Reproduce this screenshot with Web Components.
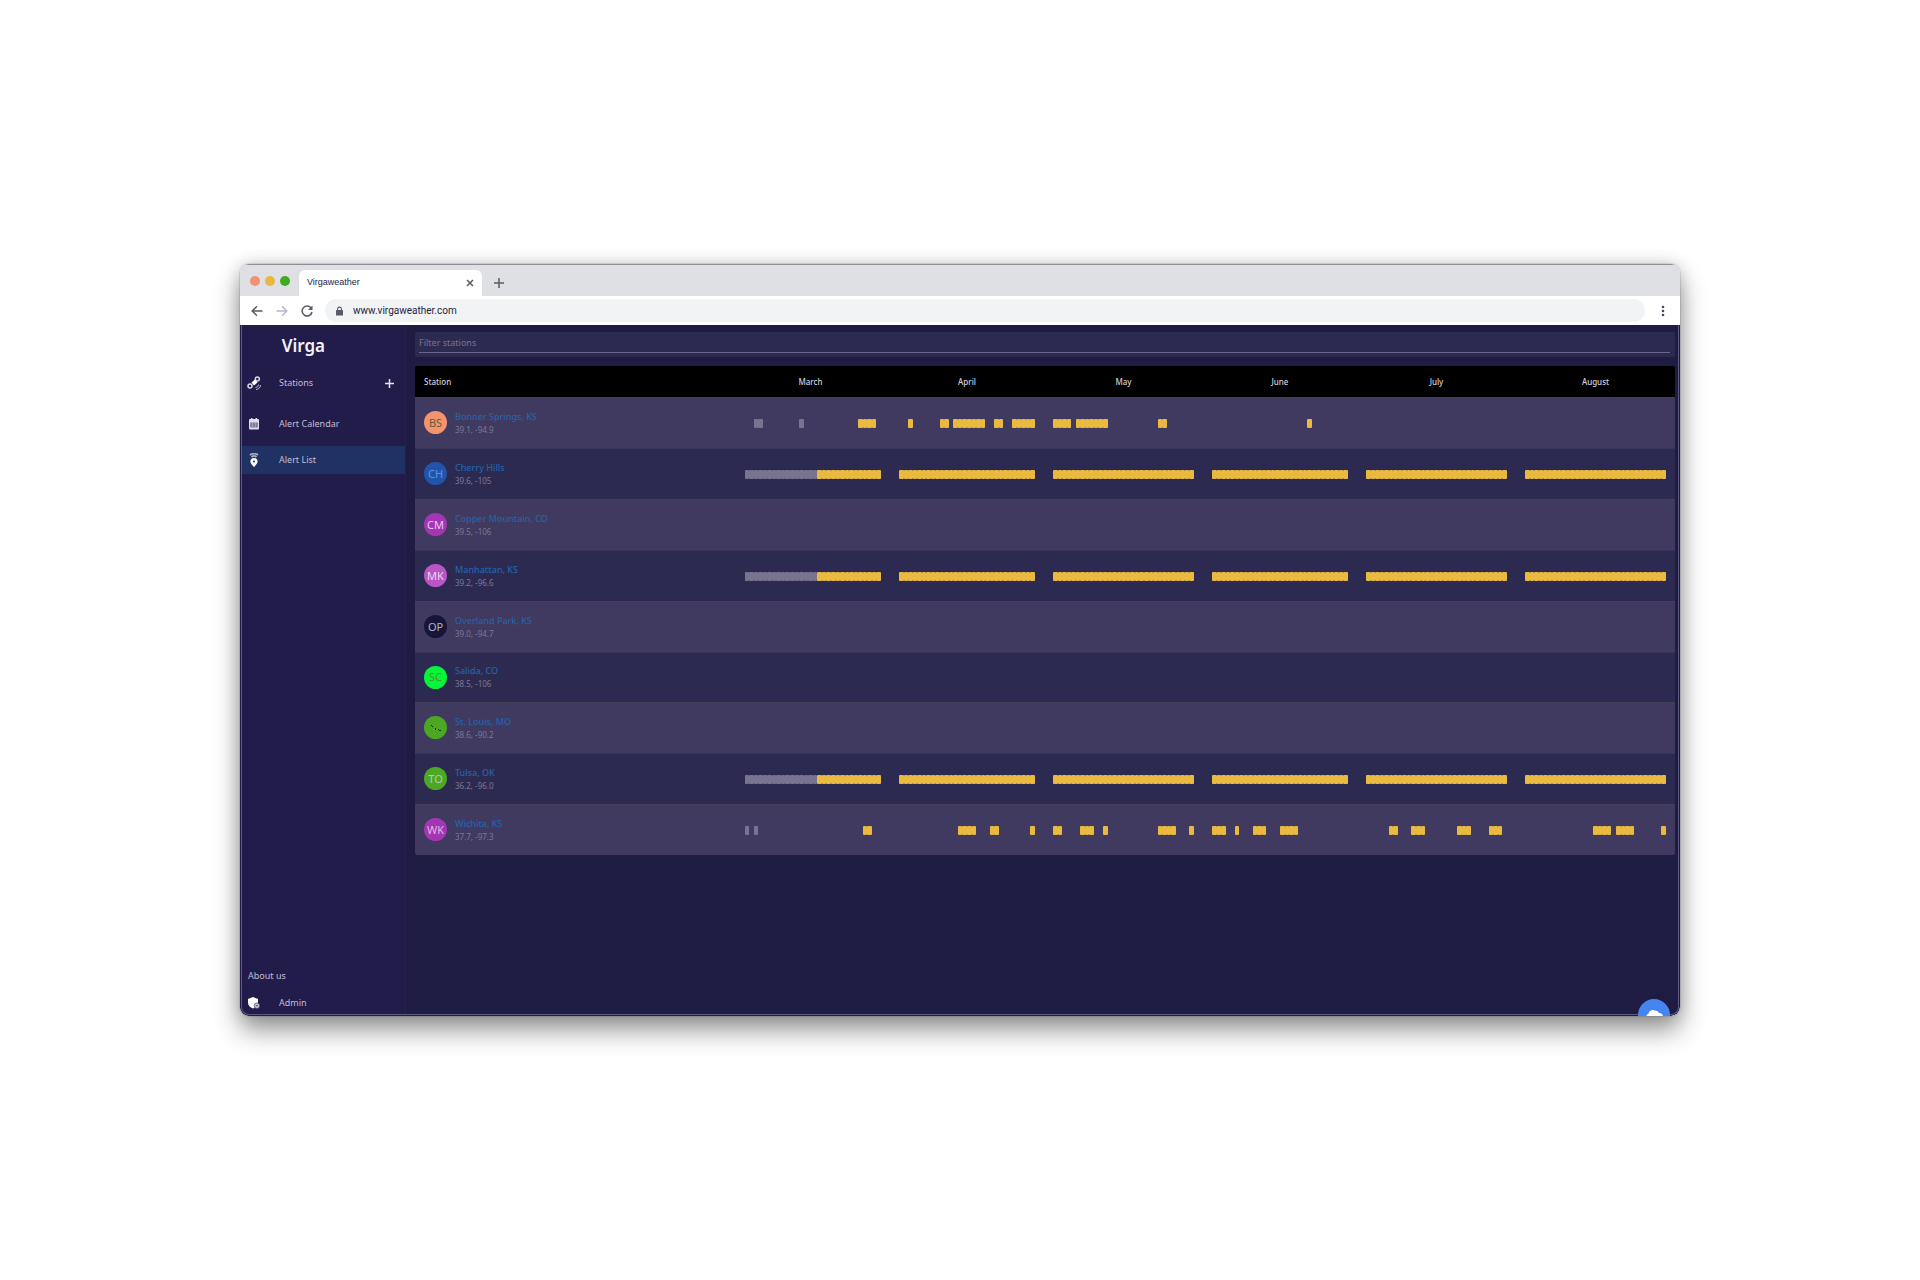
<!DOCTYPE html>
<html lang="en">
<head>
<meta charset="utf-8">
<title>Virgaweather</title>
<style>
  body { margin: 0; min-height: 100vh; display: flex; align-items: center; justify-content: center; background: #fff; font-family: "Noto Sans", sans-serif; }
  browser-window { width: 75%; }
</style>
</head>
<body>
<browser-window>
  <virga-app></virga-app>
</browser-window>

<template id="browser-window">
  <style>
    :host { display: block; box-sizing: border-box; border-radius: 9px; overflow: hidden; background: #fff; font-family: "Liberation Sans", sans-serif; color: #25233f;
      box-shadow: 0 0 0 1px rgba(60,50,80,.12), 0 14px 26px rgba(0,0,0,.42), 0 0 16px rgba(0,0,0,.16); }
    button { all: unset; display: grid; place-items: center; }
    svg { display: block; fill: none; stroke: #5c5966; stroke-width: 1.5; }
    .tabs { height: 31px; display: flex; align-items: flex-end; background: #dfe0e4; border-top: 1px solid #8f8d98; }
    .lights { display: flex; gap: 5px; padding: 0 9px 10px 10px; }
    .lights i { width: 10px; height: 10px; border-radius: 50%; }
    .tab { box-sizing: border-box; width: 183px; height: 26px; padding: 0 7px 0 8px; border-radius: 6px 6px 0 0; background: #fff; display: flex; align-items: center; justify-content: space-between; font-size: 9px; line-height: 12px; }
    .tab span { padding-bottom: 2px; }
    .new { width: 16px; height: 26px; margin-left: 9px; }
    .bar { height: 29px; display: flex; align-items: center; background: #fff; padding: 0 11px 0 9px; }
    .nav { width: 16px; height: 16px; margin-right: 9px; }
    .address { flex: 1; height: 23px; display: flex; align-items: center; gap: 9px; padding-left: 10px; border-radius: 12px; background: #f2f3f5; margin-right: 11px; margin-left: 1px; }
    input { all: unset; flex: 1; font: 10px/14px Roboto, sans-serif; color: #25233f; }
    .menu { width: 13px; height: 16px; }
  </style>
  <div class="tabs">
    <div class="lights"><i style="background:#f39273"></i><i style="background:#e9b83f"></i><i style="background:#41aa20"></i></div>
    <div class="tab"><span>Virgaweather</span>
      <button aria-label="Close tab"><svg width="10" height="10" viewBox="0 0 10 10"><path d="M2 2l6 6M8 2l-6 6"/></svg></button></div>
    <button class="new" aria-label="New tab"><svg width="10" height="10" viewBox="0 0 10 10"><path d="M5 0v10M0 5h10"/></svg></button>
  </div>
  <div class="bar">
    <button class="nav" aria-label="Back"><svg width="12" height="12" viewBox="0 0 12 12"><path d="M11.500 6H1.500M6 1.200L1.200 6 6 10.800"/></svg></button>
    <button class="nav" aria-label="Forward"><svg width="12" height="12" viewBox="0 0 12 12" style="stroke:#bdb3cf"><path d="M.5 6h10M6 1.200L10.800 6 6 10.800"/></svg></button>
    <button class="nav" aria-label="Reload"><svg width="12" height="12" viewBox="0 0 12 12"><path d="M10.300 3.300A5 5 0 1 0 11 7"/><path d="M11.500 .5V5H7z" fill="#5c5966" stroke="none"/></svg></button>
    <div class="address">
      <svg width="9" height="10" viewBox="0 0 9 10"><rect x="1" y="4" width="7" height="5.500" rx=".6" fill="#5c5966" stroke="none"/><path d="M2.600 4.500V3a1.900 1.900 0 0 1 3.800 0v1.500" stroke-width="1.100"/></svg>
      <input aria-label="Address" value="www.virgaweather.com">
    </div>
    <button class="menu" aria-label="Menu"><svg width="4" height="12" viewBox="0 0 4 12" style="fill:#4a475a;stroke:none"><circle cx="2" cy="2" r="1.300"/><circle cx="2" cy="6" r="1.300"/><circle cx="2" cy="10" r="1.300"/></svg></button>
  </div>
  <slot></slot>
</template>

<template id="virga-app">
  <style>
    :host { display: flex; position: relative; overflow: hidden; min-height: 691px; background: #1e1c42; font-family: "Noto Sans", sans-serif; border-radius: 0 0 9px 9px; }
    :host::after { content: ""; position: absolute; inset: 0 1px 1px 1px; border: 1px solid #5c5980; border-top: 0; border-radius: 0 0 8px 8px; pointer-events: none; }
    side-nav { flex: none; width: 166px; }
    main { flex: 1; min-width: 0; padding: 7px 5px 0 9px; display: flex; flex-direction: column; gap: 9px; }
    button { all: unset; position: absolute; z-index: 1; right: 10px; bottom: -15px; width: 32px; height: 32px; border-radius: 50%; background: #4485f0; display: grid; place-items: center; }
    button svg { display: block; }
  </style>
  <side-nav></side-nav>
  <main>
    <filter-field></filter-field>
    <alert-table></alert-table>
  </main>
  <button aria-label="Weather help"><svg width="18" height="12" viewBox="0 0 18 12"><path d="M4 12a4 4 0 0 1-.5-7.500A4.500 4.500 0 0 1 10.500 1.800 3.500 3.500 0 0 1 14 4a4 4 0 0 1 0 8z" fill="#fff"/></svg></button>
</template>

<template id="side-nav">
  <style>
    :host { display: flex; flex-direction: column; box-sizing: border-box; padding-left: 1px; background: #211c4a; border-right: 1px solid #252150; }
    h1 { margin: 0 0 2px; height: 42px; font: 600 17px/42px "Noto Sans", sans-serif; color: #f4f2fa; text-align: right; padding-right: 80px; }
    nav { display: flex; flex-direction: column; flex: 1; }
    .first { margin-bottom: 13px; }
    .second { margin-bottom: 8px; }
    .last { height: 26px; }
    .about { display: block; padding-left: 7px; margin-bottom: 7px; font-size: 9px; line-height: 14px; color: #c2bfd3; text-decoration: none; }
  </style>
  <h1>Virga</h1>
  <nav>
    <nav-item class="first">
      <svg slot="icon" width="14" height="14" viewBox="0 0 14 14"><circle cx="10.300" cy="3" r="2" fill="none" stroke="#d9d6e6" stroke-width="1.500"/><circle cx="3" cy="10" r="2" fill="none" stroke="#d9d6e6" stroke-width="1.500"/><path d="M4.500 6.500L8 3.500l2.500 3L7 9.500z" fill="#fff"/><path d="M8.500 11.500a3 3 0 0 0 3-3M9 13.500c2.500 0 4.500-2 4.500-4.500" fill="none" stroke="#bbb7cf"/></svg>
      Stations
      <button slot="action" aria-label="Add station" style="all:unset"><svg style="display:block" width="9" height="9" viewBox="0 0 9 9"><path d="M4.500 0v9M0 4.500h9" stroke="#e6e4ef" stroke-width="1.500"/></svg></button>
    </nav-item>
    <nav-item class="second">
      <svg slot="icon" width="12" height="12" viewBox="0 0 12 12"><path d="M2 1h1V0h1.500v1h3V0H9v1h1a1 1 0 0 1 1 1v8.500a1 1 0 0 1-1 1H2a1 1 0 0 1-1-1V2a1 1 0 0 1 1-1z" fill="#dedbea"/><path d="M2.200 4.500h7.600v5H2.200z" fill="#7d799c"/><path d="M4.500 4.500v5M7.500 4.500v5" stroke="#b5b1c9" stroke-width=".7"/></svg>
      Alert Calendar
    </nav-item>
    <nav-item active>
      <svg slot="icon" width="12" height="14" viewBox="0 0 12 14"><path d="M2 2C4 .2 8 .2 10 2M3.500 4c1.500-1.300 3.500-1.300 5 0" fill="none" stroke="#a9a9c4" stroke-width="1.700"/><path fill-rule="evenodd" d="M6 5a3.600 3.600 0 0 1 3.600 3.600C9.600 11 6 14 6 14S2.400 11 2.400 8.600A3.600 3.600 0 0 1 6 5zm0 2.500a1 1 0 1 0 0 2 1 1 0 0 0 0-2z" fill="#fff"/></svg>
      Alert List
    </nav-item>
  </nav>
  <footer>
    <a class="about" href="#about">About us</a>
    <nav-item class="last">
      <svg slot="icon" width="12" height="12" viewBox="0 0 12 12"><path d="M5 0l5 2v3.500c0 3-2 5-5 6-3-1-5-3-5-6V2z" fill="#fff"/><circle cx="9" cy="8.700" r="2.800" fill="#c8c4da" stroke="#211c4a" stroke-width=".6"/><path d="M7.800 8.700h2.400" stroke="#4a4670"/></svg>
      Admin
    </nav-item>
  </footer>
</template>

<template id="nav-item">
  <style>
    :host { display: flex; align-items: center; height: 28px; padding-right: 11px; font-size: 9px; line-height: 14px; color: #c2bfd3; }
    :host([active]) { background: #1f3263; }
    a { flex: 1; display: flex; align-items: center; color: inherit; text-decoration: none; }
    .icon { width: 26px; margin-right: 12px; display: grid; place-items: center; }
  </style>
  <a href="#"><span class="icon"><slot name="icon"></slot></span><span><slot></slot></span></a>
  <slot name="action"></slot>
</template>

<template id="filter-field">
  <style>
    :host { display: block; background: #2d2a52; border-radius: 2px; padding: 4px 5px 4px 4px; }
    input { all: unset; display: block; box-sizing: border-box; width: 100%; height: 17px; padding-bottom: 3px; border-bottom: 1px solid #6a668c; font: 9px/14px "Noto Sans", sans-serif; color: #c2bfd3; }
    input::placeholder { color: #777391; opacity: 1; }
  </style>
  <input type="text" placeholder="Filter stations" aria-label="Filter stations">
</template>

<template id="alert-table">
  <style>
    :host { display: block; }
    table { width: 100%; table-layout: fixed; border-collapse: separate; border-spacing: 0; border-radius: 2px; overflow: hidden; }
    th, td { padding: 0; box-sizing: border-box; }
    th { height: 31px; background: #000; font-size: 8px; line-height: 12px; font-weight: 500; color: #d2cfde; text-align: center; }
    th:first-child { text-align: left; padding-left: 9px; }
    .long { width: 159px; }
    .short { width: 154px; }
    td { height: 51px; background: #2d2a52; vertical-align: middle; border-top: 1px solid #39355a; padding-bottom: 1px; }
    tr:nth-child(odd) td { background: #403a60; border-top-color: #454058; }
    tr:nth-child(6) td { height: 50px; }
    td.days { padding: 0 9px; }
    .station { display: flex; align-items: center; gap: 8px; padding-left: 9px; }
    .station a { display: block; font-size: 9px; line-height: 13px; font-weight: 500; color: #2462ac; text-decoration: none; }
    .station small { display: block; font-size: 8px; line-height: 13px; color: #7c7894; }
  </style>
  <table>
    <thead><tr></tr></thead>
    <tbody></tbody>
  </table>
</template>

<script>
  function define(name, setup) {
    customElements.define(name, class extends HTMLElement {
      connectedCallback() {
        if (this.shadowRoot) return;
        const root = this.attachShadow({ mode: "open" });
        const template = document.getElementById(name);
        if (template) root.append(template.content.cloneNode(true));
        if (setup) setup(this, root);
      }
    });
  }

  const months = [["March", 31], ["April", 30], ["May", 31], ["June", 30], ["July", 31], ["August", 31]];
  const full = ["2-17p 18-31", "1-30", "1-31", "1-30", "1-31", "1-31"];
  const none = ["", "", "", "", "", ""];
  const stations = [
    ["BS", "#f3946f", "#6b5a35", "Bonner Springs, KS", "39.1, -94.9", ["4-5p 14-14p 27-30", "3-3 10-11 13-19 22-23 26-30", "1-4 6-12 24-25", "22-22", "", ""]],
    ["CH", "#2155ab", "#5c93e6", "Cherry Hills", "39.6, -105", full],
    ["CM", "#a535b5", "#e6cdea", "Copper Mountain, CO", "39.5, -106", none],
    ["MK", "#bb55c6", "#e8d5ec", "Manhattan, KS", "39.2, -96.6", full],
    ["OP", "#17153a", "#b5b3c6", "Overland Park, KS", "39.0, -94.7", none],
    ["SC", "#04f53a", "#459c22", "Salida, CO", "38.5, -106", none],
    ["", "#4ca822", "#16301c", "St. Louis, MO", "38.6, -90.2", none],
    ["TO", "#4ca822", "#b7c7b0", "Tulsa, OK", "36.2, -96.0", full],
    ["WK", "#a535b5", "#dcb9e2", "Wichita, KS", "37.7, -97.3", ["2-2p 4-4p 28-29", "14-17 21-22 30-30", "1-2 7-9 12-12 24-27 31-31", "1-3 6-6 10-12 16-19", "6-7 11-13 21-23 28-30", "16-19 21-24 31-31"]]
  ];

  define("station-avatar", (host, root) => {
    const initials = host.getAttribute("initials");
    root.innerHTML = `<style>
      :host { flex: none; width: 23px; height: 23px; border-radius: 50%; display: grid; place-items: center; background: ${host.getAttribute("fill")}; color: ${host.getAttribute("ink")}; font-size: 11px; line-height: 14px; }
      svg { display: block; }
    </style>` + (initials ? `<span>${initials}</span>` :
      `<svg width="10" height="8" viewBox="0 0 10 8"><path d="M0 1h1v1H0zM1 2h1v1H1zM4 4h1v2H4zM7 5h1v1H7zM8 6h2v1H8z" fill="currentColor"/></svg>`);
  });

  /* One grid column for each day of the month; "p" marks days that have passed. */
  define("day-strip", (host, root) => {
    const count = Number(host.getAttribute("count"));
    const kinds = Array(count).fill("");
    for (const run of host.getAttribute("runs").split(" ").filter(Boolean)) {
      const [from, to] = run.split("-").map(v => parseInt(v, 10));
      for (let day = from; day <= to; day++) kinds[day - 1] = run.endsWith("p") ? "past" : "on";
    }
    root.innerHTML = `<style>
      :host { display: grid; grid-template-columns: repeat(${count}, 1fr); height: 9px; }
      i { border-radius: 1px; }
      .on { background: #eab93f; }
      .past { background: #777390; }
    </style>` + kinds.map(kind => `<i class="${kind}"></i>`).join("");
  });

  define("alert-table", (host, root) => {
    root.querySelector("thead tr").innerHTML = "<th>Station</th>" +
      months.map(([name, count]) => `<th class="${count === 31 ? "long" : "short"}">${name}</th>`).join("");
    root.querySelector("tbody").innerHTML = stations.map(([initials, fill, ink, name, place, runs]) =>
      `<tr><td><div class="station"><station-avatar initials="${initials}" fill="${fill}" ink="${ink}"></station-avatar><div><a href="#">${name}</a><small>${place}</small></div></div></td>` +
      runs.map((run, i) => `<td class="days"><day-strip count="${months[i][1]}" runs="${run}"></day-strip></td>`).join("") + "</tr>").join("");
  });

  define("filter-field");
  define("nav-item");
  define("side-nav");
  define("virga-app");
  define("browser-window");
</script>
</body>
</html>
